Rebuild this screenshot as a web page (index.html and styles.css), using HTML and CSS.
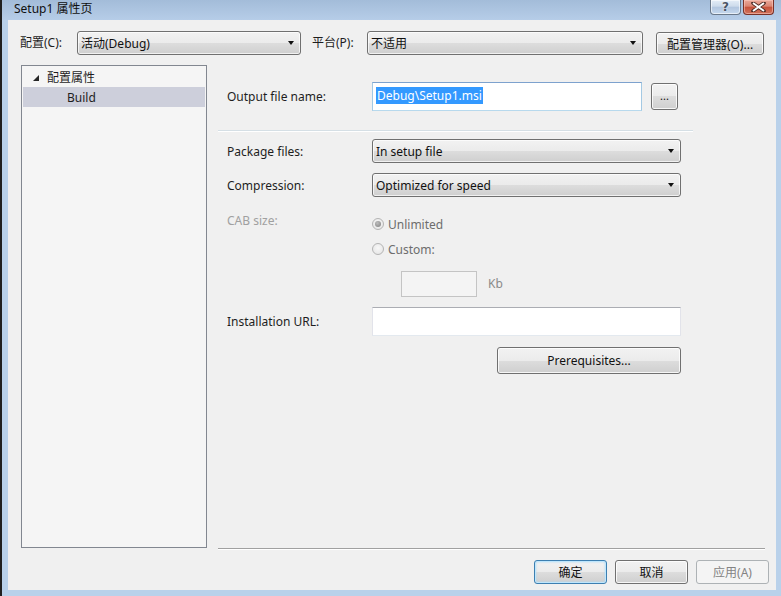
FILE: index.html
```html
<!DOCTYPE html>
<html lang="zh-CN">
<head>
<meta charset="utf-8">
<title>Setup1 属性页</title>
<link rel="stylesheet" href="styles.css">
</head>
<body>
<div class="window">
  <div class="titlebar">
    <span class="title">Setup1 属性页</span>
    <div class="caption-btns">
      <div class="cap-btn help"><span>?</span></div>
      <div class="cap-btn close">
        <svg width="15" height="10" viewBox="0 0 15 10"><path d="M2 1 L13 9 M13 1 L2 9" stroke="#4a2a24" stroke-width="3.6" stroke-linecap="round"/><path d="M2 1 L13 9 M13 1 L2 9" stroke="#fff" stroke-width="2"/></svg>
      </div>
    </div>
  </div>
  <div class="frame">
    <div class="client">
      <div class="toprow">
        <label class="top-label lbl-config">配置(C):</label>
        <div class="combo combo-config"><span>活动(Debug)</span><i class="arrow"></i></div>
        <label class="top-label lbl-platform">平台(P):</label>
        <div class="combo combo-platform"><span>不适用</span><i class="arrow"></i></div>
        <div class="btn btn-manager">配置管理器(O)...</div>
      </div>
      <div class="main">
        <div class="tree">
          <div class="tree-row root">
            <svg class="expander" width="6" height="6" viewBox="0 0 6 6"><polygon points="6,0 6,6 0,6" fill="#262626"/></svg>
            <span>配置属性</span>
          </div>
          <div class="tree-row child selected"><span>Build</span></div>
        </div>
        <div class="panel">
          <div class="panel-content">
            <div class="row row-output">
              <div class="lbl">Output file name:</div>
              <div class="ctl">
                <div class="textbox focused"><span class="sel">Debug\Setup1.msi</span></div>
                <div class="btn btn-browse">...</div>
              </div>
            </div>
            <div class="separator"></div>
            <div class="row row-package">
              <div class="lbl">Package files:</div>
              <div class="ctl"><div class="combo combo-wide"><span>In setup file</span><i class="arrow"></i></div></div>
            </div>
            <div class="row row-compress">
              <div class="lbl">Compression:</div>
              <div class="ctl"><div class="combo combo-wide"><span>Optimized for speed</span><i class="arrow"></i></div></div>
            </div>
            <div class="row row-cab">
              <div class="lbl disabled">CAB size:</div>
              <div class="ctl radios">
                <div class="radio-item"><span class="radio checked"></span><span>Unlimited</span></div>
                <div class="radio-item"><span class="radio"></span><span>Custom:</span></div>
                <div class="kb-row"><div class="textbox kb-box"></div><span class="kb">Kb</span></div>
              </div>
            </div>
            <div class="row row-url">
              <div class="lbl">Installation URL:</div>
              <div class="ctl"><div class="textbox url-box"></div></div>
            </div>
            <div class="row row-prereq">
              <div class="lbl"></div>
              <div class="ctl"><div class="btn btn-prereq">Prerequisites...</div></div>
            </div>
          </div>
        </div>
      </div>
      <div class="bottom">
        <div class="btn btn-dlg default">确定</div>
        <div class="btn btn-dlg">取消</div>
        <div class="btn btn-dlg disabled-btn">应用(A)</div>
      </div>
    </div>
  </div>
</div>
</body>
</html>
```

FILE: styles.css
```css
* { box-sizing: border-box; }
html, body { margin: 0; padding: 0; }
body {
  width: 781px;
  height: 596px;
  overflow: hidden;
  font-family: "Noto Sans", "Noto Sans CJK SC", sans-serif;
  font-size: 12px;
  color: #1e1e1e;
  background: #b9d1ea;
}
.window {
  width: 781px;
  height: 596px;
  display: flex;
  flex-direction: column;
  border-left: 2px solid #202020;
  background: #b9d1ea;
}
.titlebar {
  height: 20px;
  flex: none;
  display: flex;
  align-items: flex-start;
  background: linear-gradient(#a3bcd9, #b6cde8);
  padding-right: 7px;
}
.title {
  padding-left: 12px;
  line-height: 17px;
  color: #101010;
}
.caption-btns {
  margin-left: auto;
  display: flex;
  gap: 2px;
}
.cap-btn {
  width: 31px;
  height: 15px;
  border: 1px solid #6a7889;
  border-top: none;
  border-radius: 0 0 4px 4px;
  display: flex;
  align-items: center;
  justify-content: center;
}
.cap-btn.help {
  background: linear-gradient(#e4edf7 0%, #cddbeb 45%, #b2c6df 50%, #c5d8ee 100%);
  box-shadow: inset 0 0 0 1px rgba(255,255,255,0.6);
}
.cap-btn.help span {
  font-family: "DejaVu Sans", sans-serif;
  font-weight: bold;
  font-size: 12px;
  line-height: 12px;
  color: #4a5564;
  text-shadow: 0 0 2px #fff;
}
.cap-btn.close {
  border-color: #7a3126;
  background: linear-gradient(#eaa899 0%, #da8572 45%, #c6513a 50%, #d0735c 100%);
  box-shadow: inset 0 0 0 1px rgba(255,210,200,0.5);
}
.frame {
  flex: 1;
  padding: 0 5px 6px 6px;
  display: flex;
}
.client {
  flex: 1;
  background: #f0f0f0;
  display: flex;
  flex-direction: column;
}
.toprow {
  display: flex;
  align-items: center;
  padding: 11px 0 0 12px;
  height: 35px;
}
.top-label { display: block; line-height: 24px; }
.lbl-config { width: 57px; }
.lbl-platform { width: 55px; margin-left: 11px; }
.combo {
  height: 24px;
  border: 1px solid #707070;
  border-radius: 3px;
  background: linear-gradient(#f2f2f2 0%, #ebebeb 50%, #dddddd 50%, #cfcfcf 100%);
  box-shadow: inset 0 0 0 1px rgba(255,255,255,0.7);
  display: flex;
  align-items: center;
  padding: 0 0 0 3px;
  position: relative;
}
.combo span { flex: 1; color: #111; }
.arrow {
  width: 0; height: 0;
  border-left: 3.5px solid transparent;
  border-right: 3.5px solid transparent;
  border-top: 4px solid #111;
  margin-right: 6px;
}
.combo-config { width: 224px; }
.combo-platform { width: 276px; }
.btn {
  border: 1px solid #707070;
  border-radius: 3px;
  background: linear-gradient(#f2f2f2 0%, #ebebeb 50%, #dddddd 50%, #cfcfcf 100%);
  box-shadow: inset 0 0 0 1px rgba(255,255,255,0.8);
  display: flex;
  align-items: center;
  justify-content: center;
  color: #111;
}
.btn-manager { width: 108px; height: 23px; margin-left: 13px; margin-top: 1px; }
.main {
  display: flex;
  margin-top: 10px;
  padding: 0 11px 0 13px;
  height: 484px;
}
.tree {
  width: 186px;
  height: 483px;
  border: 1px solid #828790;
  background: #f5f5f5;
  padding: 1px;
}
.tree-row {
  height: 20px;
  display: flex;
  align-items: center;
}
.tree-row.root { padding-left: 10px; }
.expander { margin-right: 8px; margin-top: 1px; }
.tree-row.child { padding-left: 44px; }
.tree-row.selected { background: #cdcfdb; }
.panel {
  margin-left: 11px;
  flex: 1;
  border-bottom: 1px solid #a0a0a0;
  box-shadow: 0 1px 0 #ffffff;
}
.panel-content { width: 475px; }
.row {
  display: grid;
  grid-template-columns: 145px 1fr;
  align-items: center;
  padding-left: 9px;
}
.ctl { display: flex; align-items: center; }
.row-output { margin-top: 17px; }
.textbox {
  background: #fff;
  border: 1px solid;
  border-color: #abadb3 #e2e3ea #e3e9ef #e2e3ea;
}
.textbox.focused {
  width: 270px;
  height: 29px;
  border-color: #7da2ce #a4c9e3 #b7d9ed #a4c9e3;
  padding: 4px 0 0 3px;
}
.sel {
  background: #3399ff;
  color: #fff;
  display: inline-block;
  line-height: 17px;
  padding: 0 1px;
}
.btn-browse { width: 27px; height: 27px; margin-left: 9px; font-size: 11px; padding-bottom: 3px; }
.separator {
  margin-top: 19px;
  border-top: 1px solid #d5dfe5;
  border-bottom: 1px solid #ffffff;
}
.row-package { margin-top: 7px; }
.row-compress { margin-top: 10px; }
.combo-wide { width: 309px; }
.row-cab { margin-top: 17px; align-items: start; }
.lbl.disabled { color: #a0a0a0; line-height: 14px; }
.radios { flex-direction: column; align-items: flex-start; }
.radio-item {
  height: 20px;
  display: flex;
  align-items: center;
  gap: 4px;
  color: #6d6d6d;
}
.radio-item + .radio-item { margin-top: 5px; }
.radio {
  width: 12px;
  height: 12px;
  border-radius: 50%;
  border: 1px solid #b4b4b4;
  background: radial-gradient(circle at 50% 40%, #f8f8f8, #e2e2e2);
  display: inline-block;
  position: relative;
}
.radio.checked::after {
  content: "";
  position: absolute;
  left: 2px; top: 2px;
  width: 6px; height: 6px;
  border-radius: 50%;
  background: radial-gradient(circle at 40% 35%, #bdbdbd, #7f7f7f);
}
.kb-row {
  display: flex;
  align-items: center;
  margin-top: 12px;
  margin-left: 29px;
}
.kb-box {
  width: 76px;
  height: 26px;
  background: #f4f4f4;
  border-color: #c4c4c4;
}
.kb { margin-left: 11px; color: #8a8a8a; margin-top: -2px; }
.row-url { margin-top: 10px; }
.url-box { width: 309px; height: 29px; }
.row-prereq { margin-top: 11px; }
.btn-prereq { width: 184px; height: 27px; margin-left: 125px; }
.bottom {
  display: flex;
  justify-content: flex-end;
  gap: 8px;
  margin-top: 11px;
  padding-right: 7px;
}
.btn-dlg { width: 73px; height: 24px; }
.btn-dlg.default {
  border-color: #3c7fb1;
  box-shadow: inset 0 0 0 1px #bfe6fc, inset 0 0 2px 1px #a9d8f5;
}
.btn-dlg.disabled-btn {
  border-color: #adb2b5;
  background: #f4f4f4;
  color: #838383;
  box-shadow: none;
}
```
